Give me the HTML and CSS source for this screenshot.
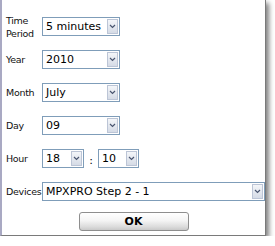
FILE: index.html
```html
<!DOCTYPE html>
<html>
<head>
<meta charset="utf-8">
<link rel="stylesheet" href="styles.css">
</head>
<body>
<div class="panel">
  <div class="row">
    <div class="label">Time<br>Period</div>
    <div class="combo w78"><span class="val">5 minutes</span><span class="btn"><svg width="7" height="5" viewBox="0 0 7 5"><path d="M1 1 L3.5 3.5 L6 1" fill="none" stroke="#4a5670" stroke-width="1.2"/></svg></span></div>
  </div>
  <div class="row">
    <div class="label">Year</div>
    <div class="combo w78"><span class="val">2010</span><span class="btn"><svg width="7" height="5" viewBox="0 0 7 5"><path d="M1 1 L3.5 3.5 L6 1" fill="none" stroke="#4a5670" stroke-width="1.2"/></svg></span></div>
  </div>
  <div class="row">
    <div class="label">Month</div>
    <div class="combo w78"><span class="val">July</span><span class="btn"><svg width="7" height="5" viewBox="0 0 7 5"><path d="M1 1 L3.5 3.5 L6 1" fill="none" stroke="#4a5670" stroke-width="1.2"/></svg></span></div>
  </div>
  <div class="row">
    <div class="label">Day</div>
    <div class="combo w78"><span class="val">09</span><span class="btn"><svg width="7" height="5" viewBox="0 0 7 5"><path d="M1 1 L3.5 3.5 L6 1" fill="none" stroke="#4a5670" stroke-width="1.2"/></svg></span></div>
  </div>
  <div class="row">
    <div class="label">Hour</div>
    <div class="combo w41"><span class="val">18</span><span class="btn"><svg width="7" height="5" viewBox="0 0 7 5"><path d="M1 1 L3.5 3.5 L6 1" fill="none" stroke="#4a5670" stroke-width="1.2"/></svg></span></div>
    <span class="colon">:</span>
    <div class="combo w40"><span class="val">10</span><span class="btn"><svg width="7" height="5" viewBox="0 0 7 5"><path d="M1 1 L3.5 3.5 L6 1" fill="none" stroke="#4a5670" stroke-width="1.2"/></svg></span></div>
  </div>
  <div class="row">
    <div class="label">Devices</div>
    <div class="combo wdev"><span class="val">MPXPRO Step 2 - 1</span><span class="btn"><svg width="7" height="5" viewBox="0 0 7 5"><path d="M1 1 L3.5 3.5 L6 1" fill="none" stroke="#4a5670" stroke-width="1.2"/></svg></span></div>
  </div>
  <div class="row ok-row">
    <div class="ok">OK</div>
  </div>
</div>
</body>
</html>
```

FILE: styles.css
```css
html, body {
  margin: 0;
  padding: 0;
  background: #ffffff;
}
.panel {
  box-sizing: border-box;
  width: 266px;
  height: 236px;
  background: #ffffff;
  border-left: 2px solid #a9a9c3;
  border-right: 1px solid #7a7a7a;
  border-bottom: 1px solid #7a7a7a;
  box-shadow: 3px 3px 5px rgba(0, 0, 0, 0.5);
  padding-top: 10px;
  display: flex;
  flex-direction: column;
  font-family: "DejaVu Sans", Tahoma, sans-serif;
  color: #000;
}
.row {
  height: 33px;
  flex: none;
  display: flex;
  align-items: center;
  padding-left: 4px;
}
.row.ok-row {
  height: 26px;
  justify-content: center;
  padding-left: 0;
}
.label {
  width: 36px;
  font-size: 9.5px;
  letter-spacing: -0.3px;
  line-height: 13px;
  color: #111;
  white-space: nowrap;
}
.combo {
  height: 19px;
  box-sizing: border-box;
  border: 1px solid #7f9db9;
  display: flex;
  align-items: stretch;
  background: #fff;
}
.w78 { width: 78px; }
.w41 { width: 42px; }
.w40 { width: 41px; }
.wdev { width: 223px; }
.val {
  flex: 1;
  font-size: 11px;
  line-height: 17px;
  padding-left: 3px;
  white-space: nowrap;
  overflow: hidden;
  color: #000;
}
.btn {
  width: 11px;
  margin: 1px;
  box-sizing: border-box;
  border: 1px solid #bcc5d6;
  background: linear-gradient(#f4f6f9, #d5dbe6);
  display: flex;
  align-items: center;
  justify-content: center;
}
.btn svg { display: block; }
.colon {
  width: 14px;
  text-align: center;
  font-size: 11px;
  padding-top: 4px;
}
.ok {
  width: 110px;
  height: 19px;
  box-sizing: border-box;
  border: 1px solid #8e8e8e;
  border-radius: 3px;
  background: linear-gradient(#ffffff 0%, #f4f4f4 45%, #dcdcdc 80%, #c9c9c9 100%);
  font-size: 11px;
  font-weight: bold;
  line-height: 17px;
  text-align: center;
}
```
